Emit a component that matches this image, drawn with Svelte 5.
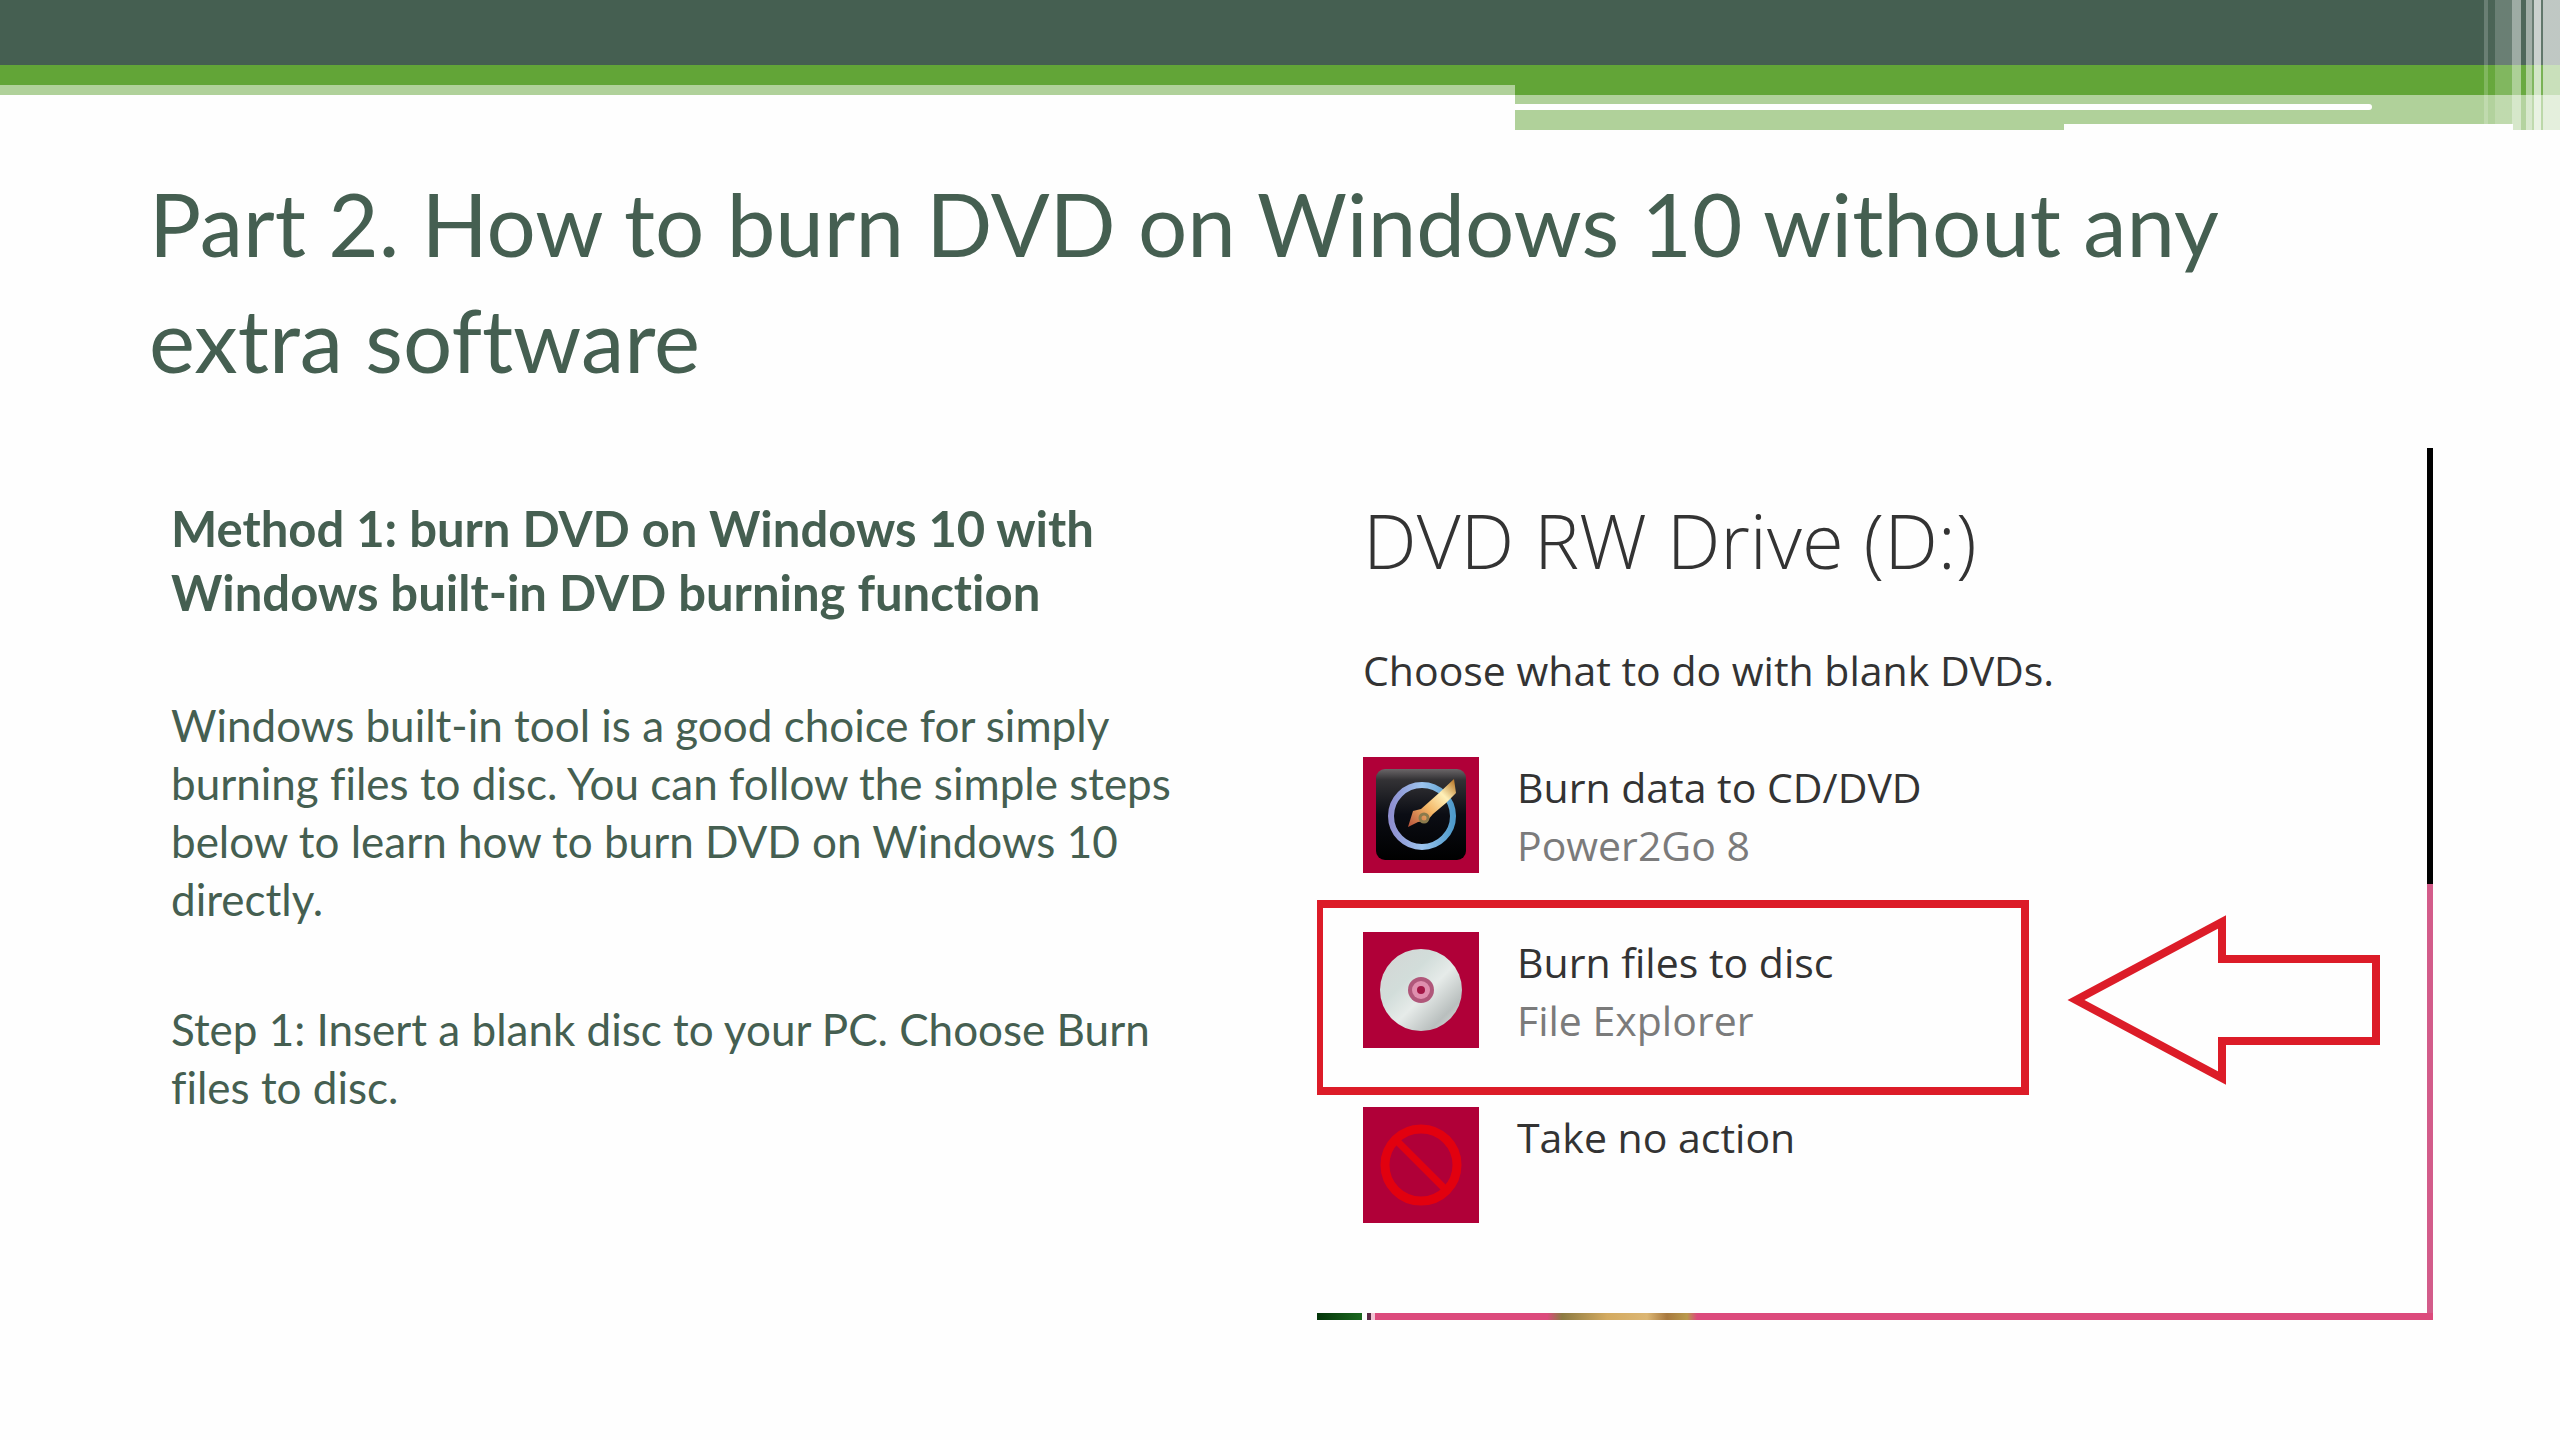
<script>
  const actions = [
    { id: 'burner', title: 'Burn data to CD/DVD', program: 'Power2Go 8' },
    { id: 'disc', title: 'Burn files to disc', program: 'File Explorer' },
    { id: 'none', title: 'Take no action', program: '' }
  ];
</script>

<div class="slide">
  <header class="banner">
    <div class="dark"></div>
    <div class="rows">
      <div class="left"></div>
      <div class="right">
        <div class="line"></div>
        <div class="step"></div>
      </div>
    </div>
    <div class="strips"></div>
  </header>

  <main>
    <h1>Part 2. How to burn DVD on Windows 10 without any<br />extra software</h1>

    <div class="columns">
      <section class="text">
        <h2>Method 1: burn DVD on Windows 10 with<br />Windows built-in DVD burning function</h2>
        <p>Windows built-in tool is a good choice for simply<br />burning files to disc. You can follow the simple steps<br />below to learn how to burn DVD on Windows 10<br />directly.</p>
        <p>Step 1: Insert a blank disc to your PC. Choose Burn<br />files to disc.</p>
      </section>

      <section class="dialog">
        <div class="content">
          <h3>DVD RW Drive (D:)</h3>
          <p class="prompt">Choose what to do with blank DVDs.</p>
          <ul>
            {#each actions as action (action.id)}
              <li>
                <svg class="icon" viewBox="0 0 116 116" aria-hidden="true">
                  <rect width="116" height="116" fill="#b00038" />
                  {#if action.id === 'burner'}
                    <defs>
                      <linearGradient id="case" x1="0" y1="0" x2="0" y2="1">
                        <stop offset="0" stop-color="#6a6668" />
                        <stop offset="0.12" stop-color="#333235" />
                        <stop offset="0.5" stop-color="#0b0d14" />
                        <stop offset="1" stop-color="#000" />
                      </linearGradient>
                      <linearGradient id="ring" x1="0" y1="0" x2="1" y2="0">
                        <stop offset="0" stop-color="#8f8fd0" />
                        <stop offset="0.5" stop-color="#9cc4ee" />
                        <stop offset="1" stop-color="#4f9bcb" />
                      </linearGradient>
                      <linearGradient id="flame" x1="0" y1="1" x2="1" y2="0">
                        <stop offset="0" stop-color="#b5503a" />
                        <stop offset="0.4" stop-color="#f3b565" />
                        <stop offset="0.7" stop-color="#fff0b8" />
                        <stop offset="1" stop-color="#b06a18" />
                      </linearGradient>
                    </defs>
                    <rect x="13" y="12" width="90" height="91" rx="9" fill="url(#case)" />
                    <circle cx="59" cy="59" r="31" fill="none" stroke="url(#ring)" stroke-width="6" />
                    <path d="M45 70 L50 54 L58 52 L76 36 L91 22 L93 36 L83 46 L70 57 L64 64 L55 65 Z" fill="url(#flame)" />
                    <circle cx="61" cy="61" r="4" fill="none" stroke="#8a7a4c" stroke-width="3" />
                  {:else if action.id === 'disc'}
                    <defs>
                      <linearGradient id="disc" x1="0" y1="0" x2="1" y2="1">
                        <stop offset="0" stop-color="#d3d5d4" />
                        <stop offset="0.35" stop-color="#d2ddda" />
                        <stop offset="0.55" stop-color="#e6ebe9" />
                        <stop offset="0.8" stop-color="#b9bfbe" />
                        <stop offset="1" stop-color="#e4e4e4" />
                      </linearGradient>
                    </defs>
                    <circle cx="58" cy="58" r="41" fill="url(#disc)" />
                    <circle cx="58" cy="58" r="13" fill="#b0577a" />
                    <circle cx="58" cy="58" r="9" fill="#df8fae" />
                    <circle cx="58" cy="58" r="4" fill="#a31746" />
                  {:else}
                    <circle cx="58" cy="58" r="36" fill="none" stroke="#e2000f" stroke-width="9" />
                    <path d="M34 34 L82 82" stroke="#e2000f" stroke-width="7" />
                  {/if}
                </svg>
                <div class="label">
                  <span>{action.title}</span>
                  <small>{action.program}</small>
                </div>
              </li>
            {/each}
          </ul>
          <div class="marker"></div>
          <svg class="arrow" viewBox="0 0 316 176" aria-hidden="true">
            <path d="M11 87 L157 9 V46 H311 V128 H157 V165 Z" fill="none" stroke="#dc1c28" stroke-width="8" />
          </svg>
        </div>
        <div class="edge"></div>
        <div class="floor"></div>
      </section>
    </div>
  </main>
</div>

<style>
  :global(body) {
    margin: 0;
    background: #fefefe;
  }

  h1, h2, h3, p, ul {
    margin: 0;
    padding: 0;
    font-weight: 400;
  }

  .slide {
    min-height: 100vh;
    color: #455f51;
    font-family: Lato, sans-serif;
    font-variant-ligatures: none;
  }

  .banner {
    position: relative;
    height: 130px;
  }

  .dark {
    height: 65px;
    background: #455f51;
  }

  .rows {
    display: grid;
    grid-template-columns: 1515fr 1045fr;
    align-items: start;
  }

  .left {
    height: 20px;
    background: #62a537;
    border-bottom: 10px solid #b0d19a;
  }

  .right {
    height: 65px;
    background: linear-gradient(#62a537 30px, #b0d19a 30px);
    position: relative;
  }

  .line {
    position: absolute;
    top: 39px;
    left: 0;
    width: 82%;
    height: 6px;
    border-radius: 0 3px 3px 0;
    background: #fff;
  }

  .step {
    position: absolute;
    right: 47px;
    bottom: 0;
    width: 43%;
    height: 6px;
    background: #fefefe;
  }

  /* translucent vertical bars over the right end of the banner */
  .strips {
    position: absolute;
    top: 0;
    right: 0;
    width: 76px;
    height: 130px;
    background: linear-gradient(
      90deg,
      rgba(255, 255, 255, 0.2) 4px,
      rgba(255, 255, 255, 0.03) 4px 11px,
      rgba(255, 255, 255, 0.2) 11px 28px,
      rgba(255, 255, 255, 0.48) 28px 37px,
      rgba(255, 255, 255, 0.05) 37px 42px,
      rgba(255, 255, 255, 0.5) 42px 48px,
      rgba(255, 255, 255, 0.2) 48px 50px,
      rgba(255, 255, 255, 0.72) 50px 57px,
      rgba(255, 255, 255, 0.15) 57px 59px,
      rgba(255, 255, 255, 0.66) 59px
    );
  }

  main {
    padding: 36px 127px 0 149px;
  }

  h1 {
    font-size: 87px;
    line-height: 116px;
  }

  .columns {
    display: grid;
    grid-template-columns: 1168fr 1116fr;
    margin-top: 50px;
  }

  .text {
    padding: 48px 0 0 22px;
  }

  h2 {
    font-size: 49px;
    line-height: 64px;
    font-weight: 700;
  }

  .text p {
    margin-top: 72px;
    font-size: 44px;
    line-height: 58px;
  }

  .dialog {
    display: grid;
    grid-template-columns: 1fr 6px;
    grid-template-rows: 865px 7px;
    color: #333;
    font-family: "Open Sans", sans-serif;
  }

  .content {
    position: relative;
    padding: 38px 0 0 46px;
  }

  h3 {
    font-size: 76px;
    line-height: 108px;
    font-weight: 300;
  }

  .prompt {
    margin-top: 46px;
    font-size: 41px;
    line-height: 60px;
  }

  ul {
    display: grid;
    gap: 59px;
    margin-top: 57px;
    list-style: none;
  }

  li {
    display: flex;
    gap: 38px;
    height: 116px;
  }

  .icon {
    width: 116px;
    height: 116px;
  }

  .label {
    display: grid;
    grid-template-rows: 58px 58px;
    font-size: 41px;
    line-height: 60px;
  }

  small {
    font-size: 41px;
    color: #7b7b7b;
  }

  .marker {
    position: absolute;
    top: 452px;
    left: 0;
    width: 712px;
    height: 195px;
    box-sizing: border-box;
    border: 8px solid #dc1c28;
    border-left-width: 6px;
  }

  .arrow {
    position: absolute;
    top: 465px;
    right: 46px;
    width: 316px;
    height: 176px;
  }

  .edge {
    background: linear-gradient(#000 436px, #d35c8a 436px);
  }

  .floor {
    grid-column: 1 / 3;
    background: linear-gradient(
      90deg,
      #04350a,
      #1b681f 45px,
      #fefefe 45px 50px,
      #5b2a45 50px 54px,
      #f3c3d4 54px 58px,
      #dc4a7c 58px 230px,
      #8c7a42 245px,
      #d3aa60 290px,
      #dcb673 330px,
      #a8793f 350px,
      #b99a4c 370px,
      #dc4a7c 380px
    );
  }
</style>
